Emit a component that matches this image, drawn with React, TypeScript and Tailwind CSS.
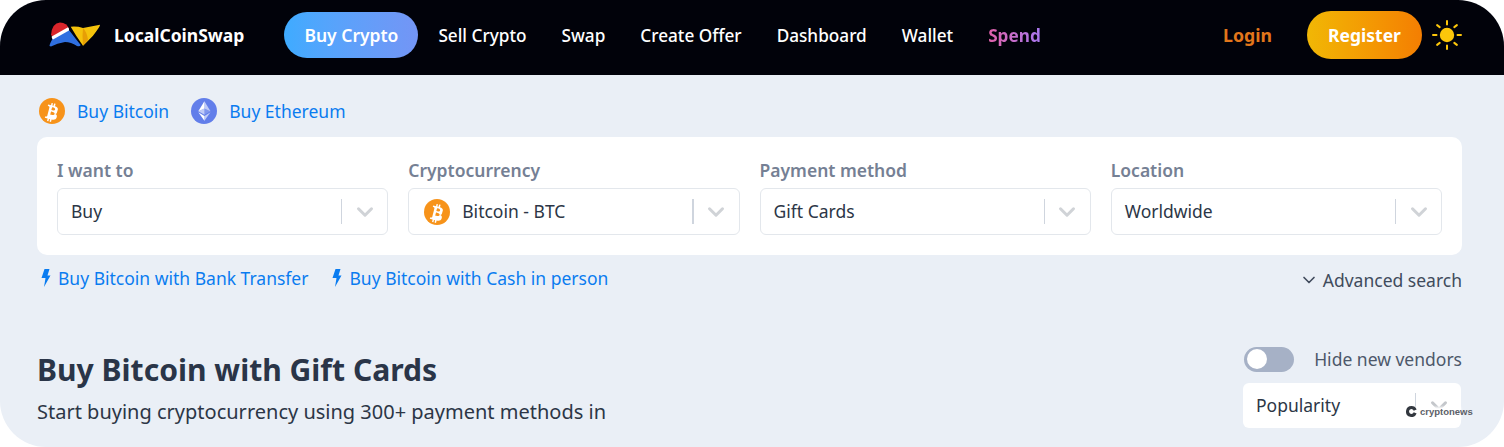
import { ChevronDown } from 'lucide-react';
import type { ReactNode } from 'react';

function BitcoinIcon() {
  return (
    <span className="flex items-center justify-center rounded-full bg-[#f7931a] w-[26px] h-[26px] shrink-0">
      <svg viewBox="0 0 32 32" className="w-full h-full">
        <path
          fill="#fff"
          d="M23.2 14.1c.3-2.1-1.3-3.3-3.5-4l.7-2.9-1.8-.4-.7 2.8-1.4-.3.7-2.8-1.7-.5-.7 2.9-1.1-.3-2.4-.6-.5 1.9s1.3.3 1.3.3c.7.2.8.7.8 1l-.8 3.3-2 7.8c-.1.2-.3.5-.8.4l-1.3-.3-.9 2 2.3.6 1.2.3-.7 2.9 1.7.4.7-2.9 1.4.4-.7 2.9 1.8.4.7-2.9c3 .6 5.3.3 6.2-2.4.8-2.2 0-3.4-1.6-4.3 1.2-.3 2-1 2.2-2.6zm-4 5.6c-.5 2.2-4.2 1-5.4.7l1-3.9c1.2.3 5 .9 4.4 3.2zm.6-5.6c-.5 2-3.6 1-4.6.7l.9-3.5c1 .3 4.2.7 3.7 2.8z"
        />
      </svg>
    </span>
  );
}

function EthereumIcon() {
  return (
    <span className="flex items-center justify-center rounded-full bg-[#627eea] w-[26px] h-[26px]">
      <svg viewBox="0 0 32 32" className="w-full h-full">
        <path fill="#fff" fillOpacity=".6" d="M16.5 4v8.9l7.5 3.3z" />
        <path fill="#fff" d="M16.5 4L9 16.2l7.5-3.3z" />
        <path fill="#fff" fillOpacity=".6" d="M16.5 22v6L24 17.6z" />
        <path fill="#fff" d="M16.5 28v-6L9 17.6z" />
        <path fill="#fff" fillOpacity=".2" d="M16.5 20.6l7.5-4.4-7.5-3.3z" />
        <path fill="#fff" fillOpacity=".6" d="M9 16.2l7.5 4.4v-7.7z" />
      </svg>
    </span>
  );
}

function Logo() {
  return (
    <svg viewBox="0 0 52 26" className="w-[52px] h-[26px] shrink-0">
      <path fill="#2f6fe0" d="M0.5 24 Q0.5 22 4 16 L20 8 Q26 16 31.7 23 Q31 25 28 24 Q22 20 16 20 Q8 21 2 24.5z" />
      <path fill="#d9252b" d="M2 13 Q3 1 11 0.5 Q18 0.5 20 7 L4 15z" />
      <path fill="#fff" d="M2.7 14.5 L19 5.3 Q20.5 6.5 20 8.5 L4 17.5 Q2.5 16.5 2.7 14.5z" />
      <path fill="#f5c30c" d="M21.7 4.7 Q28 4 34 6 L51 2.7 Q51.5 4 44 13.7 Q39 19 34 23.7 Q27 14 21.7 4.7z" />
      <path fill="#e79f05" d="M34 6 Q38 10 39 18 L34 23.7 Q33 14 34 6z" />
    </svg>
  );
}

function SunIcon() {
  return (
    <svg viewBox="0 0 30 30" className="w-[30px] h-[30px]">
      <circle cx="15" cy="15" r="7.2" fill="#fcc60a" />
      <g stroke="#fcc60a" strokeWidth="2" strokeLinecap="round">
        <path d="M15 1v3.5M15 25.5V29M1 15h3.5M25.5 15H29M5.1 5.1l2.6 2M22.3 22.9l2.6 2M5.1 24.9l2.6-2M22.3 7.1l2.6-2" />
      </g>
    </svg>
  );
}

function BoltIcon() {
  return (
    <svg viewBox="0 0 9 18" className="w-[10px] h-[18px] mr-[7px] ml-[4px] shrink-0">
      <path fill="currentColor" d="M3 0h5L6 6.5h3L2.5 18 4 9H0z" />
    </svg>
  );
}

function Field({ label, thick, children }: { label: string; thick?: boolean; children: ReactNode }) {
  return (
    <div className="flex-1 min-w-0">
      <div className="text-[17.5px] leading-[24px] font-semibold text-[#758094]">{label}</div>
      <div className="mt-[6px] h-[47px] flex items-center rounded-[6px] border border-[#e3e7ec] bg-white pl-[13px] text-[17.5px] text-[#2c3646]">
        <div className="flex-1 flex items-center gap-[12px] min-w-0">{children}</div>
        <span className={`h-[25px] bg-[#cfd5de] ${thick ? 'w-[2px]' : 'w-px'}`} />
        <span className="w-[45px] flex justify-center">
          <ChevronDown className="w-[26px] h-[26px] text-[#d0d3d7]" strokeWidth={2.8} />
        </span>
      </div>
    </div>
  );
}

const navLinks = ['Sell Crypto', 'Swap', 'Create Offer', 'Dashboard', 'Wallet'];

export default function App() {
  return (
    <div className="w-[1504px] h-[447px] bg-white overflow-hidden font-['Noto_Sans',sans-serif]">
      <div className="relative h-full rounded-[46px] overflow-hidden bg-[#eaeff6]">
        <header className="h-[75px] bg-[#01020a] flex items-center pl-[49px] pr-[42px] pb-[5px]">
          <Logo />
          <span className="ml-[13px] text-[17.5px] font-bold text-white">LocalCoinSwap</span>
          <a className="ml-[40px] w-[134px] h-[46px] rounded-full bg-gradient-to-r from-[#3eabff] to-[#7395f5] flex items-center justify-center text-[17.5px] font-semibold text-white">
            Buy Crypto
          </a>
          <nav className="ml-[20px] mt-[2px] flex items-center gap-[35px] text-[17.2px] font-medium text-white">
            {navLinks.map((link) => (
              <a key={link}>{link}</a>
            ))}
            <a className="font-bold bg-gradient-to-r from-[#e05fa8] to-[#a776ef] bg-clip-text text-transparent">Spend</a>
          </nav>
          <a className="ml-auto text-[17.7px] font-bold text-[#e2761b]">Login</a>
          <a className="ml-[35px] w-[115px] h-[48px] rounded-full bg-gradient-to-r from-[#f1b705] to-[#f47e02] flex items-center justify-center text-[17.5px] font-bold text-white">
            Register
          </a>
          <span className="ml-[10px] flex">
            <SunIcon />
          </span>
        </header>

        <main className="pl-[37px] pr-[42px]">
          <div className="pt-[22px] pl-[2px] flex items-center text-[17.5px] text-[#0a7cf0] h-[50px]">
            <BitcoinIcon />
            <a className="ml-[12px]">Buy Bitcoin</a>
            <span className="ml-[22px]">
              <EthereumIcon />
            </span>
            <a className="ml-[12px]">Buy Ethereum</a>
          </div>

          <section className="mt-[12px] h-[118px] rounded-[10px] bg-white px-[20px] pt-[21px] flex gap-[20px]">
            <Field label="I want to">Buy</Field>
            <Field label="Cryptocurrency" thick>
              <span className="ml-[2px]">
                <BitcoinIcon />
              </span>
              Bitcoin - BTC
            </Field>
            <Field label="Payment method">Gift Cards</Field>
            <Field label="Location">Worldwide</Field>
          </section>

          <div className="mt-[9px] h-[28px] flex items-center text-[17.5px] text-[#0a7cf0]">
            <a className="flex items-center">
              <BoltIcon />
              Buy Bitcoin with Bank Transfer
            </a>
            <a className="ml-[20px] flex items-center">
              <BoltIcon />
              Buy Bitcoin with Cash in person
            </a>
            <a className="ml-auto mt-[4px] flex items-center text-[#404b5c]">
              <ChevronDown className="w-[20px] h-[20px] mr-[4px]" strokeWidth={2} />
              Advanced search
            </a>
          </div>

          <div className="mt-[54px] flex justify-between">
            <div>
              <h1 className="text-[30.1px] leading-[40px] mt-[4px] font-bold text-[#2a3548]">Buy Bitcoin with Gift Cards</h1>
              <p className="mt-[8px] text-[20px] leading-[28px] text-[#2c3646]">
                Start buying cryptocurrency using 300+ payment methods in
              </p>
            </div>
            <div className="w-[218px] ml-auto mr-[1px]">
              <div className="flex items-center justify-between pl-[1px] mr-[-1px]">
                <span className="w-[50px] h-[25px] rounded-full bg-[#a6b1c6] flex items-center pl-[3px]">
                  <span className="w-[20px] h-[20px] rounded-full bg-white" />
                </span>
                <span className="text-[17.5px] text-[#4d586a]">Hide new vendors</span>
              </div>
              <div className="mt-[11px] h-[45px] rounded-[6px] bg-white pl-[13px] flex items-center text-[17.5px] text-[#2c3646]">
                <span className="flex-1 mb-[2px]">Popularity</span>
                <span className="w-px h-[25px] bg-[#cfd5de]" />
                <span className="w-[45px] flex justify-center">
                  <ChevronDown className="w-[26px] h-[26px] text-[#c4c7cb]" strokeWidth={2.8} />
                </span>
              </div>
            </div>
          </div>
        </main>

        {/* Watermark laid over the sort select */}
        <div className="absolute left-[1406px] top-[407px] w-[55px] h-[13px] bg-white blur-[1px]" />
        <div className="absolute left-[1406px] top-[406px] flex items-center gap-[3px]">
          <svg viewBox="0 0 12 12" className="w-[11px] h-[11px]">
            <path fill="#33383f" d="M6 0a6 6 0 1 0 5.6 8.2L8.4 6.9A2.6 2.6 0 1 1 8.4 5.1L11.6 3.8A6 6 0 0 0 6 0z" />
          </svg>
          <span className="text-[9.5px] leading-[11px] font-bold text-[#5c6068] font-['Liberation_Sans',sans-serif]">cryptonews</span>
        </div>
      </div>
    </div>
  );
}
